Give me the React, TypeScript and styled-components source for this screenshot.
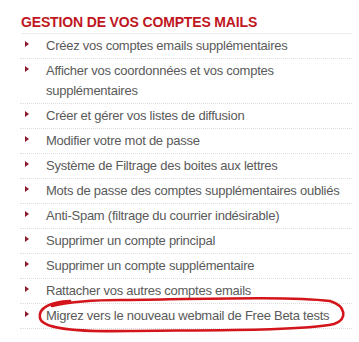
import { FC } from 'react';
import styled, { createGlobalStyle } from 'styled-components';

const GlobalStyle = createGlobalStyle`
  html, body {
    margin: 0;
    padding: 0;
    background: #fff;
  }
  body {
    font-family: 'Liberation Sans', Arial, sans-serif;
  }
`;

const StyledPanel = styled.div`
  position: relative;
  width: 359px;
  height: 342px;
  padding: 14px 7px 0 20px;
  box-sizing: border-box;
`;
const StyledTitle = styled.h2`
  margin: 0 0 0 1px;
  padding: 0 0 3px 0;
  font-size: 14px;
  line-height: 16px;
  font-weight: bold;
  letter-spacing: -0.15px;
  color: #c0161e;
  border-bottom: 1px solid #ededed;
`;
const StyledList = styled.ul`
  list-style: none;
  margin: 0;
  padding: 0;
`;
const StyledItem = styled.li`
  display: flex;
  align-items: flex-start;
  padding: 2px 0;
  border-bottom: 1px dotted #dcdcdc;
`;
const StyledBullet = styled.span`
  flex: 0 0 26px;
  height: 20px;
  position: relative;
  &::before {
    content: '';
    position: absolute;
    left: 5px;
    top: 5px;
    border-style: solid;
    border-width: 3px 0 3px 4px;
    border-color: transparent transparent transparent #8e1b2b;
  }
`;
const StyledLabel = styled.span`
  width: 310px;
  font-size: 13px;
  line-height: 20px;
  letter-spacing: -0.25px;
  color: #5a5a5a;
`;
const StyledCircle = styled.svg`
  position: absolute;
  left: 0;
  top: 0;
  pointer-events: none;
`;

const items = [
  'Créez vos comptes emails supplémentaires',
  'Afficher vos coordonnées et vos comptes supplémentaires',
  'Créer et gérer vos listes de diffusion',
  'Modifier votre mot de passe',
  'Système de Filtrage des boites aux lettres',
  'Mots de passe des comptes supplémentaires oubliés',
  'Anti-Spam (filtrage du courrier indésirable)',
  'Supprimer un compte principal',
  'Supprimer un compte supplémentaire',
  'Rattacher vos autres comptes emails',
  'Migrez vers le nouveau webmail de Free Beta tests'
];

const App: FC = () => {
  return (
    <>
      <GlobalStyle />
      <StyledPanel>
        <StyledTitle>GESTION DE VOS COMPTES MAILS</StyledTitle>
        <StyledList>
          {items.map((item, index) => (
            <StyledItem key={index}>
              <StyledBullet />
              <StyledLabel>{item}</StyledLabel>
            </StyledItem>
          ))}
        </StyledList>
        <StyledCircle width="359" height="342" viewBox="0 0 359 342">
          <path
            d="M 70 301 C 50 302, 38 308, 40 318 C 42 328, 70 332, 130 331 C 210 330, 300 331, 334 324 C 348 319, 346 306, 330 301 C 290 296, 200 299, 120 300 C 95 300, 70 302, 52 306"
            fill="none"
            stroke="#d3141b"
            strokeWidth="2.6"
            strokeLinecap="round"
          />
        </StyledCircle>
      </StyledPanel>
    </>
  );
};

export default App;
